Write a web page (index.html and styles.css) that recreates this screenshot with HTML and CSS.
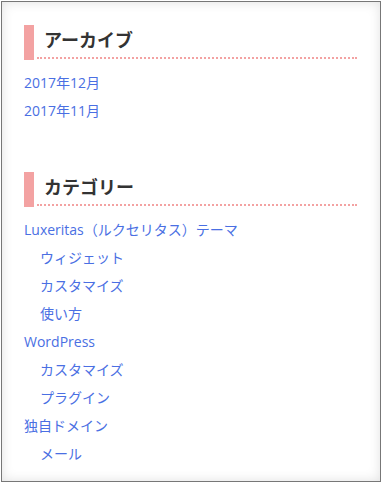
FILE: index.html
```html
<!DOCTYPE html>
<html lang="ja">
<head>
  <meta charset="UTF-8" />
  <title>サイドバー</title>
  <link rel="stylesheet" href="styles.css">
</head>
<body>
  <div class="sidebar">
    <div class="widget">
      <h2 class="widget-title"><span>アーカイブ</span></h2>
      <ul class="cat-list">
        <li><a href="#">2017年12月</a></li>
        <li><a href="#">2017年11月</a></li>
      </ul>
    </div>

    <div class="widget">
      <h2 class="widget-title"><span>カテゴリー</span></h2>
      <ul class="cat-list">
        <li><a href="#">Luxeritas（ルクセリタス）テーマ</a>
          <ul class="children">
            <li><a href="#">ウィジェット</a></li>
            <li><a href="#">カスタマイズ</a></li>
            <li><a href="#">使い方</a></li>
          </ul>
        </li>
        <li><a href="#">WordPress</a>
          <ul class="children">
            <li><a href="#">カスタマイズ</a></li>
            <li><a href="#">プラグイン</a></li>
          </ul>
        </li>
        <li><a href="#">独自ドメイン</a>
          <ul class="children">
            <li><a href="#">メール</a></li>
          </ul>
        </li>
      </ul>
    </div>
  </div>
</body>
</html>
```

FILE: styles.css
```css
/* Base */
* {
  margin: 0;
  padding: 0;
  box-sizing: border-box;
}
body {
  font-family: 'Open Sans', 'Noto Sans CJK JP', sans-serif;
  font-size: 14px;
  color: #333;
  background: #fff;
}
/* Sidebar frame */
.sidebar {
  margin: 1px;
  width: 380px;
  height: 481px;
  border: 1px solid #777;
  box-shadow: inset 0 0 12px rgba(0, 0, 0, 0.12);
  padding: 23px 23px 0 22px;
}
.widget {
  margin-bottom: 47px;
}
/* Widget heading */
.widget-title {
  border-left: 10px solid #f3a2a2;
  padding: 0 0 1px 3px;
  margin-bottom: 9px;
  font-size: 18px;
  font-weight: bold;
  color: #333;
}
.widget-title span {
  display: block;
  padding: 1px 0 3px 7px;
  line-height: 28px;
  border-bottom: 2px dotted #f3a2a2;
}
/* Lists */
.cat-list {
  list-style: none;
}
.cat-list li {
  line-height: 28px;
}
.cat-list a {
  color: #4a6fe3;
  text-decoration: none;
}
.children {
  list-style: none;
  padding-left: 16px;
}
```
